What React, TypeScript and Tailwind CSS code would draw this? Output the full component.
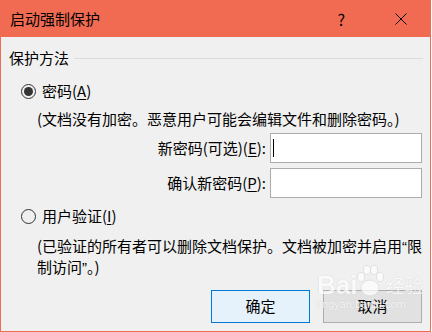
import React from "react";

const font = { fontFamily: '"Noto Sans CJK SC", "Noto Sans", sans-serif' };
const latin = { fontFamily: '"Liberation Sans", sans-serif' };

function Radio({ checked }: { checked?: boolean }) {
  return (
    <span className="flex h-[15px] w-[15px] items-center justify-center rounded-full border border-[#333333] bg-[#f0f0f0]">
      {checked && <span className="h-[9px] w-[9px] rounded-full bg-[#333333]" />}
    </span>
  );
}

function Field({ label, mnemonic, rest, focused }: { label: string; mnemonic: string; rest: string; focused?: boolean }) {
  return (
    <div className="flex h-[30px] items-center justify-end pr-[8px]">
      <span className="mr-[4px] text-[15px] leading-[20px] text-black">
        {label}(<span className="underline underline-offset-2">{mnemonic}</span>){rest}
      </span>
      <div className="flex h-[30px] w-[152px] items-center border border-[#acacac] bg-white pl-[2px]">
        {focused && <span className="h-[18px] w-px bg-black" />}
      </div>
    </div>
  );
}

export default function App() {
  return (
    <div className="h-[332px] w-[432px] bg-white" style={font}>
      <div className="relative flex h-[332px] w-[431px] flex-col border-x border-b border-[#ee6d55] bg-[#f0f0f0]">
        {/* Title bar */}
        <div className="-mx-px flex h-[37px] items-center bg-[#f06b52] pl-[10px]">
          <span className="text-[15px] leading-[20px] text-black">启动强制保护</span>
          <span className="ml-auto mr-[50px] text-[16px] leading-[20px] text-black">?</span>
          <svg width="12" height="12" viewBox="0 0 12 12" className="mr-[24px]">
            <path d="M0.5 0.5 L11.5 11.5 M11.5 0.5 L0.5 11.5" stroke="#000" strokeWidth="1" />
          </svg>
        </div>

        {/* Group header */}
        <div className="mt-[11px] flex h-[20px] items-center pl-[8px] pr-[7px]">
          <span className="text-[15px] leading-[20px] text-black">保护方法</span>
          <div className="ml-[5px] h-px flex-1 bg-[#dcdcdc]" />
        </div>

        {/* Password option */}
        <div className="mt-[13px] flex h-[20px] items-center pl-[20px]">
          <Radio checked />
          <span className="ml-[6px] text-[15px] leading-[20px] text-black">
            密码(<span className="underline underline-offset-2">A</span>)
          </span>
        </div>
        <div className="mt-[8px] h-[20px] pl-[36px] text-[15px] leading-[20px] text-black whitespace-nowrap">
          (文档没有加密。恶意用户可能会编辑文件和删除密码。)
        </div>

        <div className="mt-[4px]">
          <Field label="新密码(可选)" mnemonic="E" rest=":" focused />
        </div>
        <div className="mt-[5px]">
          <Field label="确认新密码" mnemonic="P" rest=":" />
        </div>

        {/* User auth option */}
        <div className="mt-[8px] flex h-[20px] items-center pl-[20px]">
          <Radio />
          <span className="ml-[6px] text-[15px] leading-[20px] text-black">
            用户验证(<span className="underline underline-offset-2">I</span>)
          </span>
        </div>
        <div className="mt-[10px] pl-[36px] text-[15px] leading-[20px] text-black whitespace-nowrap">
          (已验证的所有者可以删除文档保护。文档被加密并启用<span style={latin}>“</span>限
          <br />
          制访问<span style={latin}>”</span>。)
        </div>

        {/* Buttons */}
        <div className="mt-[12px] flex justify-end gap-[13px] pr-[8px]">
          <button className="h-[33px] w-[99px] border border-[#0078d7] bg-[#e5f1fb] text-[15px] text-black">
            确定
          </button>
          <button className="h-[33px] w-[99px] border border-[#adadad] bg-[#e1e1e1] text-[15px] text-black">
            取消
          </button>
        </div>

        {/* Baidu jingyan watermark */}
        <div className="pointer-events-none absolute left-[316px] top-[264px] flex flex-col text-white opacity-70">
          <div className="flex items-end">
            <span className="text-[26px] font-bold leading-[26px]" style={{ ...latin, textShadow: "0 0 1px #bbb" }}>
              Bai
            </span>
            <svg width="30" height="34" viewBox="0 0 30 34" className="-ml-[2px]">
              <g fill="#fff" stroke="#c8c8c8" strokeWidth="0.6">
                <ellipse cx="15" cy="24" rx="9" ry="8" />
                <ellipse cx="6" cy="13" rx="3.5" ry="4.5" />
                <ellipse cx="12" cy="6" rx="3.5" ry="4.5" />
                <ellipse cx="19" cy="6" rx="3.5" ry="4.5" />
                <ellipse cx="25" cy="13" rx="3.5" ry="4.5" />
              </g>
            </svg>
            <span className="mb-[2px] text-[19px] leading-[22px]" style={{ textShadow: "0 0 1px #bbb" }}>经验</span>
          </div>
          <span className="text-[11px] leading-[12px]" style={{ ...latin, textShadow: "0 0 1px #bbb" }}>
            jingyan.baidu.com
          </span>
        </div>
      </div>
    </div>
  );
}
